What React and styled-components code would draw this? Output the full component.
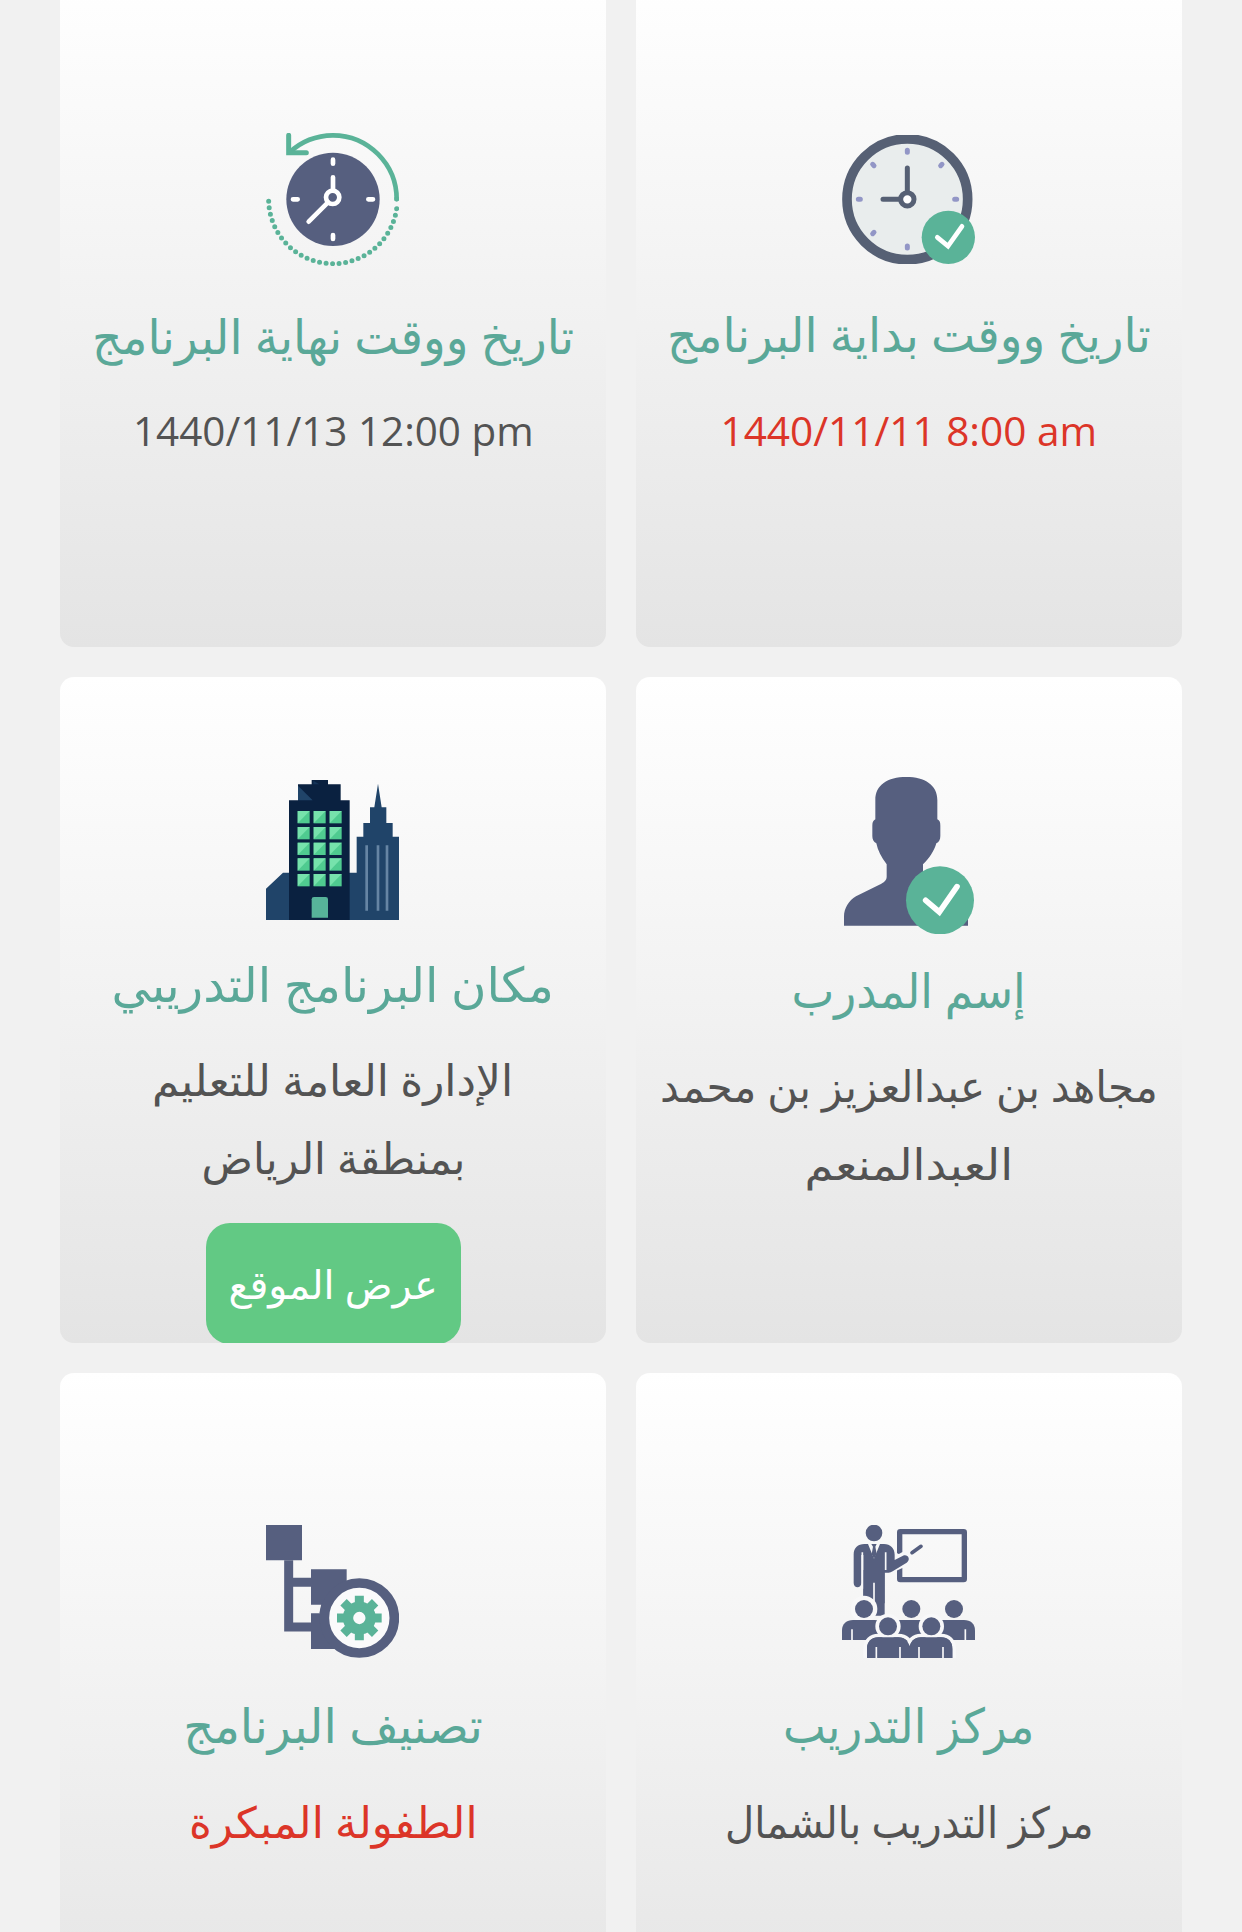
import React, { Fragment, useLayoutEffect, useRef, useState } from 'react';
import styled, { createGlobalStyle } from 'styled-components';

const slate = '#565f7f';
const green = '#5ab398';

const GlobalStyle = createGlobalStyle`
  body {
    margin: 0;
    background-color: #f1f1f1;
    font-family: 'Open Sans', 'DejaVu Sans', sans-serif;
  }
`;

const Page = styled.main`
  height: 1932px;
  overflow: hidden;
  background-color: #f1f1f1;
`;

const Grid = styled.div`
  display: grid;
  grid-template-columns: 546px 546px;
  grid-auto-rows: 666px;
  gap: 30px;
  justify-content: center;
  margin-top: -19px;
`;

const Card = styled.section`
  display: flex;
  flex-direction: column;
  align-items: center;
  box-sizing: border-box;
  padding-top: ${props => props.$top}px;
  border-radius: 14px;
  overflow: hidden;
  background: linear-gradient(#ffffff, #e4e4e4);

  > svg {
    display: block;
    flex: none;
    margin-right: 1px;
  }
`;

const Title = styled.h2`
  margin: ${props => props.$gap}px 0 0;
  font-size: 48px;
  font-weight: 400;
  line-height: 78px;
  color: #5aa898;
`;

const Value = styled.div`
  margin-top: ${props => props.$gap}px;
  font-size: ${props => (props.$date ? 40 : 43)}px;
  line-height: 78px;
  color: ${props => (props.$red ? '#dc3528' : '#535353')};
`;

const MapButton = styled.button`
  flex: none;
  width: 255px;
  height: 121px;
  margin-top: 26px;
  padding: 0;
  border: 0;
  border-radius: 24px;
  background-color: #62c984;
  color: #fff;
  font-family: inherit;
  font-size: 40px;
  line-height: 119px;
`;

const Line = styled.span`
  display: flex;
  justify-content: center;
  width: ${props => props.$width}px;
  margin: 0 auto;
  white-space: nowrap;

  span {
    flex: none;
  }
`;

// keeps a line of text at its set width
const FitLine = ({ width, children }) => {
  const ref = useRef(null);
  const [scale, setScale] = useState(1);

  useLayoutEffect(() => {
    setScale(width / ref.current.offsetWidth);
  }, [width, children]);

  return (
    <Line $width={width}>
      <span ref={ref} dir="auto" style={{ transform: `scaleX(${scale})` }}>
        {children}
      </span>
    </Line>
  );
};

const EndClock = () => (
  <svg width="133" height="133" viewBox="78 69 399 399" fill="none" strokeLinecap="round">
    <circle cx="279" cy="268" r="140" fill={slate} />
    <path
      d="M86 274A193 193 0 0 0 279 461A193 193 0 0 0 471 288"
      stroke={green}
      strokeWidth="15"
      strokeDasharray="0 19.7"
    />
    <path d="M470 268A192 192 0 0 0 279 76Q202 77 149 127" stroke={green} strokeWidth="14" />
    <path d="M470 262V272" stroke={green} strokeWidth="14" strokeLinecap="butt" />
    <path d="M146 76V128H199" stroke={green} strokeWidth="15" />
    <g stroke="#fff" strokeWidth="14">
      <path d="M279 149V161M279 375V387M159 268H173M385 268H399M279 202V240M264 277L206 335" />
      <circle cx="278" cy="262" r="20" />
    </g>
  </svg>
);

const StartClock = () => (
  <svg width="133" height="129" viewBox="66 75 399 387" fill="none" strokeLinecap="round">
    <circle cx="262" cy="268" r="181" fill="#e9eded" stroke="#566074" strokeWidth="29" />
    <g stroke="#9296c6" strokeWidth="15">
      <path d="M262 121V127M262 408V414M115 268H121M404 268H410" />
      <path d="M158 163L162 167M366 163L362 167M158 371L162 367" />
    </g>
    <g stroke="#566074" strokeWidth="15">
      <path d="M262 174V244M189 268H238" />
      <circle cx="262" cy="268" r="20" fill="#fff" />
    </g>
    <circle cx="385" cy="382" r="80" fill={green} />
    <path d="M352 382L384 408L426 349" stroke="#fff" strokeWidth="14" />
  </svg>
);

const windowCols = [143, 191, 239];
const windowRows = [153, 201, 248, 295, 342];

const Buildings = () => (
  <svg width="133" height="140" viewBox="48 60 399 420">
    <path d="M48 386L99 338H320V230H340V189H360V142H373L384 71L395 142H409V189H428V230H447V480H48Z" fill="#204469" />
    <path d="M350 256V452M384 256V452M411 256V452" stroke="#6685a4" strokeWidth="8" />
    <path d="M117 480V121H144V73H185V60H234V73H272V121H299V480Z" fill="#0a2140" />
    <path d="M144 77L188 121H144Z" fill="#204469" />
    <path d="M190 62L208 73H190Z" fill="#153458" />
    {windowRows.map(y =>
      windowCols.map(x => (
        <Fragment key={`${x}-${y}`}>
          <path d={`M${x} ${y}h36v37h-36z`} fill="#4fcb90" />
          <path d={`M${x} ${y}h36l-36 37z`} fill="#76e2ac" />
        </Fragment>
      ))
    )}
    <path d="M185 473V418Q185 411 192 411H227Q234 411 234 418V473Z" fill="#57b49a" />
  </svg>
);

const Trainer = () => (
  <svg width="131" height="157" viewBox="69 51 393 471" fill="none">
    <path
      d="M72 497V470C72 445 86 422 108 409L178 374C192 367 200 361 200 350V313C184 293 173 270 169 250C160 245 157 238 157 228V196C157 186 160 181 166 178V120C166 75 202 51 259 51C315 51 352 75 352 120V178C359 181 361 187 361 197V228C361 239 357 246 349 250C343 272 328 295 309 313V350C309 362 320 367 332 374L402 409C428 422 444 445 444 470V497Z"
      fill={slate}
    />
    <circle cx="360" cy="421" r="102" fill={green} />
    <path d="M317 421L358 456L411 380" stroke="#fff" strokeWidth="17" strokeLinecap="round" />
  </svg>
);

const teeth = [0, 45, 90, 135];

const Category = () => (
  <svg width="133" height="133" viewBox="48 75 399 399" fill="none">
    <path d="M48 75H156V181H48Z" fill={slate} />
    <path d="M116 181V381H183M116 247H183" stroke={slate} strokeWidth="27" />
    <path d="M183 208H290V314H183ZM183 340H290V447H183Z" fill={slate} />
    <path d="M208 340L214 312H250V340Z" fill={slate} />
    <circle cx="328" cy="354" r="105" fill="#fafafb" stroke={slate} strokeWidth="29" />
    <circle cx="328" cy="354" r="34" stroke={green} strokeWidth="31" />
    {teeth.map(angle => (
      <path
        key={angle}
        d="M328 287V322M328 386V421"
        stroke={green}
        strokeWidth="27"
        transform={`rotate(${angle} 328 354)`}
      />
    ))}
  </svg>
);

const Classroom = () => (
  <svg width="133" height="133" viewBox="66 75 399 399" fill="none">
    <rect x="239" y="95" width="194" height="144" rx="2" stroke={slate} strokeWidth="16" />
    <path d="M226 157L252 170L265 160V196L226 214Z" fill="#f8f8f9" />
    <path d="M254 174L214 197" stroke="#f8f8f9" strokeWidth="38" strokeLinecap="round" />
    <path d="M276 158L303 139" stroke={slate} strokeWidth="11" strokeLinecap="round" />
    <circle cx="162" cy="99" r="25" fill={slate} />
    <path
      d="M144 132H133C114 132 101 144 101 163V249C101 266 124 266 124 249V165H130V310H194V218H206C210 218 214 216 218 214L260 188C274 178 263 161 249 167L224 180V164C224 145 211 132 192 132H180L162 176Z"
      fill={slate}
    />
    <path d="M164 280V347H194V210H130V288H160" fill={slate} />
    <path d="M127 157V266M197 157V210M162 248V310" stroke="#f8f8f9" strokeWidth="5" />
    <path d="M154 132H170L166 140L170 162L162 176L155 162L159 140Z" fill={slate} />
    <circle cx="132" cy="327" r="40" fill="#f8f8f9" />
    <g fill={slate}>
      <circle cx="132" cy="327" r="27" />
      <circle cx="274" cy="327" r="27" />
      <circle cx="402" cy="327" r="27" />
      <path d="M66 420V391C66 371 80 360 99 360H164C182 360 194 373 194 391V420Z" />
      <path d="M210 420V390C210 372 224 360 242 360H305C323 360 336 372 336 390V420Z" />
      <path d="M338 420V391C338 372 351 360 369 360H432C452 360 465 372 465 391V420Z" />
    </g>
    <path d="M96 388V420M436 388V420" stroke="#f8f8f9" strokeWidth="5" />
    <g fill={slate} stroke="#f8f8f9" strokeWidth="22" paintOrder="stroke">
      <path d="M141 485V446C141 425 155 412 175 412H235C256 412 269 425 269 446V485Z" />
      <path d="M269 485V446C269 425 283 412 303 412H363C384 412 397 425 397 446V485Z" />
      <circle cx="204" cy="379" r="27" />
      <circle cx="334" cy="379" r="27" />
    </g>
    <path
      d="M141 474V446C141 425 155 412 175 412H235C249 412 262 420 269 438C276 420 288 412 303 412H363C384 412 397 425 397 446V474Z"
      fill={slate}
    />
    <path d="M169 441V474M240 441V474M297 441V474M369 441V474" stroke="#f8f8f9" strokeWidth="5" />
  </svg>
);

const cards = [
  {
    icon: StartClock,
    top: 154,
    gap: 31,
    valueGap: 19,
    title: ['تاريخ ووقت بداية البرنامج', 484],
    lines: [['1440/11/11 8:00 am', 376]],
    date: true,
    red: true,
  },
  {
    icon: EndClock,
    top: 152,
    gap: 31,
    valueGap: 17,
    title: ['تاريخ ووقت نهاية البرنامج', 482],
    lines: [['1440/11/13 12:00 pm', 401]],
    date: true,
  },
  {
    icon: Trainer,
    top: 100,
    gap: 17,
    valueGap: 18,
    title: ['إسم المدرب', 234],
    lines: [['مجاهد بن عبدالعزيز بن محمد', 498], ['العبدالمنعم', 209]],
  },
  {
    icon: Buildings,
    top: 103,
    gap: 25,
    valueGap: 18,
    title: ['مكان البرنامج التدريبي', 442],
    lines: [['الإدارة العامة للتعليم', 361], ['بمنطقة الرياض', 264]],
    button: ['عرض الموقع', 209],
  },
  {
    icon: Classroom,
    top: 152,
    gap: 28,
    valueGap: 19,
    title: ['مركز التدريب', 251],
    lines: [['مركز التدريب بالشمال', 369]],
  },
  {
    icon: Category,
    top: 152,
    gap: 28,
    valueGap: 19,
    title: ['تصنيف البرنامج', 300],
    lines: [['الطفولة المبكرة', 289]],
    red: true,
  },
];

const InfoCard = ({ card }) => {
  const Icon = card.icon;
  return (
    <Card $top={card.top}>
      <Icon />
      <Title $gap={card.gap}>
        <FitLine width={card.title[1]}>{card.title[0]}</FitLine>
      </Title>
      <Value $gap={card.valueGap} $red={card.red} $date={card.date}>
        {card.lines.map(([text, width]) => (
          <FitLine key={text} width={width}>
            {text}
          </FitLine>
        ))}
      </Value>
      {card.button ? (
        <MapButton type="button">
          <FitLine width={card.button[1]}>{card.button[0]}</FitLine>
        </MapButton>
      ) : null}
    </Card>
  );
};

const App = () => (
  <Page dir="rtl" lang="ar">
    <GlobalStyle />
    <Grid>
      {cards.map(card => (
        <InfoCard key={card.title[0]} card={card} />
      ))}
    </Grid>
  </Page>
);

export default App;
